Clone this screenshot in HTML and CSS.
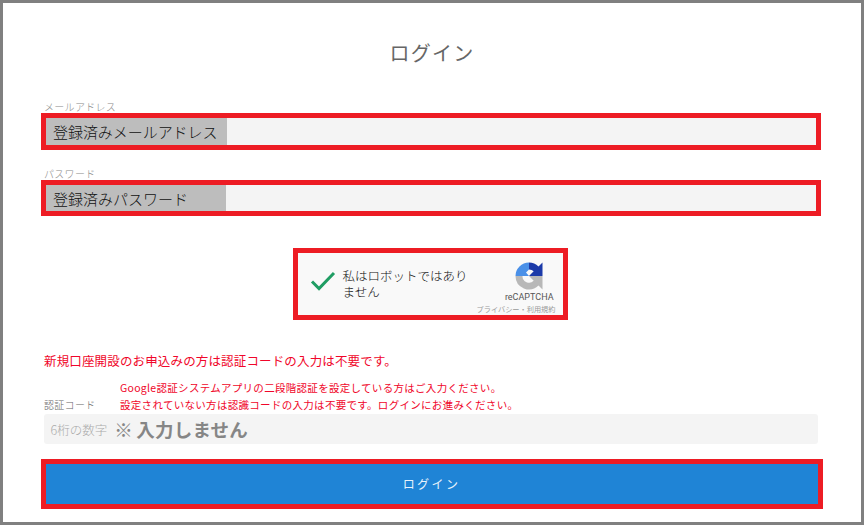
FILE: index.html
```html
<!DOCTYPE html>
<html lang="ja">
<head>
<meta charset="utf-8">
<title>ログイン</title>
<link rel="stylesheet" href="styles.css">
</head>
<body>
<main class="frame">
  <h1 class="title">ログイン</h1>
  <form class="form">
    <div class="field field-mail">
      <label class="label">メールアドレス</label>
      <div class="redbox box-mail"><span class="filled fill-mail">登録済みメールアドレス</span></div>
    </div>
    <div class="field field-pass">
      <label class="label">パスワード</label>
      <div class="redbox box-pass"><span class="filled fill-pass">登録済みパスワード</span></div>
    </div>
    <div class="captcha">
      <svg class="check" width="26" height="22" viewBox="0 0 26 22"><path d="M2 11.5 L9 18.5 L24 3" fill="none" stroke="#1f9d63" stroke-width="3"/></svg>
      <span class="captcha-text">私はロボットではありません</span>
      <div class="captcha-brand">
        <svg class="recaptcha" width="30" height="30" viewBox="0 0 30 30">
          <path d="M1.5 15 A13.5 13.5 0 0 1 15 1.5 L15 8.5 L12 11.5 L15 15 L8.5 15 Z" fill="#4a90e8"/>
          <path d="M15 1.5 A13.5 13.5 0 0 1 24.5 5.5 L28.5 1.5 L28.5 15 L15 15 L19.7 10.3 A6.5 6.5 0 0 0 15 8.5 Z" fill="#1c3aa9"/>
          <path d="M1.5 15 L8.5 15 A6.5 6.5 0 0 0 19.7 19.7 L15 15 L28.5 15 L28.5 28.5 L24.5 24.5 A13.5 13.5 0 0 1 1.5 15 Z" fill="#b8b8b8"/>
        </svg>
        <span class="brand-name">reCAPTCHA</span>
        <span class="brand-links">プライバシー・利用規約</span>
      </div>
    </div>
    <p class="notice">新規口座開設のお申込みの方は認証コードの入力は不要です。</p>
    <div class="code-head">
      <label class="label code-label">認証コード</label>
      <p class="code-note">Google認証システムアプリの二段階認証を設定している方はご入力ください。<br>設定されていない方は認識コードの入力は不要です。ログインにお進みください。</p>
    </div>
    <div class="code-input"><span class="placeholder">6桁の数字</span><span class="no-input">※ 入力しません</span></div>
    <button class="submit" type="button">ログイン</button>
  </form>
</main>
</body>
</html>
```
FILE: styles.css
```css
* { box-sizing: border-box; }
html, body { margin: 0; padding: 0; }
body {
  width: 864px;
  height: 525px;
  overflow: hidden;
  background: #fff;
  font-family: "Noto Sans CJK JP", "Noto Sans", sans-serif;
}
.frame {
  width: 864px;
  height: 525px;
  border: 3px solid #808080;
  background: #fff;
  padding-top: 36px;
}
.title {
  margin: 0;
  height: 28px;
  line-height: 28px;
  font-size: 20px;
  font-weight: 400;
  letter-spacing: 1.2px;
  color: #666;
  text-align: center;
}
.form {
  margin-top: 34px;
  padding-left: 38px;
  width: 818px;
  display: flex;
  flex-direction: column;
}
.label {
  display: block;
  height: 12px;
  line-height: 12px;
  font-size: 10px;
  color: #888;
  padding-left: 3px;
  letter-spacing: 0.3px;
  font-weight: 300;
}
.redbox {
  width: 780px;
  border: 5px solid #ed1c24;
  background: #f4f4f4;
  display: flex;
}
.box-mail { height: 37px; }
.box-pass { height: 36px; }
.field-pass { margin-top: 18px; }
.filled {
  background: #bdbdbd;
  color: #111;
  font-size: 15px;
  font-weight: 300;
  white-space: nowrap;
  display: flex;
  align-items: center;
}
.fill-mail { width: 181px; padding-left: 7px; letter-spacing: -0.05px; }
.fill-pass { width: 180px; padding-left: 7px; }
.captcha {
  align-self: center;
  margin: 32px 0 0 -2px;
  width: 275px;
  height: 72px;
  border: 5px solid #ed1c24;
  background: #f9f9f9;
  display: flex;
  align-items: flex-start;
  position: relative;
}
.check { margin: 17px 0 0 12px; flex: none; }
.captcha-text {
  width: 134px;
  margin: 15px 0 0 7px;
  font-size: 12.5px;
  font-weight: 300;
  line-height: 16px;
  color: #111;
}
.captcha-brand {
  position: absolute;
  right: 0;
  top: 0;
  width: 90px;
  height: 62px;
  display: flex;
  flex-direction: column;
  align-items: flex-end;
}
.recaptcha { margin: 8px 19px 0 0; }
.brand-name {
  margin: 1px 9px 0 0;
  font-family: "Roboto", sans-serif;
  font-size: 9px;
  line-height: 11px;
  color: #555;
}
.brand-links {
  margin: 2px 7px 0 0;
  font-size: 7.2px;
  line-height: 9px;
  color: #999;
  white-space: nowrap;
}
.notice {
  margin: 32px 0 0 3px;
  height: 18px;
  line-height: 18px;
  font-size: 12.5px;
  letter-spacing: 0.15px;
  font-weight: 400;
  color: #f0062a;
}
.code-head {
  display: flex;
  align-items: flex-end;
  margin-top: 9px;
}
.code-label {
  width: 79px;
  color: #666;
  flex: none;
  margin-bottom: 2px;
}
.code-note {
  margin: 0;
  font-size: 10.5px;
  line-height: 17px;
  letter-spacing: 0.3px;
  color: #f0062a;
  white-space: nowrap;
}
.code-input {
  margin: 1px 0 0 2.5px;
  width: 774.5px;
  height: 30px;
  background: #f4f4f4;
  border-radius: 3px;
  display: flex;
  align-items: center;
  padding-left: 7px;
}
.placeholder {
  font-size: 12.5px;
  font-weight: 300;
  color: #aaa;
}
.no-input {
  margin-left: 7px;
  font-size: 18.5px;
  font-weight: 700;
  letter-spacing: 0.2px;
  word-spacing: -1px;
  color: #868686;
}
.submit {
  margin-top: 15px;
  margin-left: -0.5px;
  width: 782px;
  height: 50px;
  border: 5px solid #ed1c24;
  background: #1f84d6;
  color: #e8f2fb;
  font: 400 12px "Noto Sans CJK JP", sans-serif;
  letter-spacing: 2.4px;
  padding: 0 0 2px;
}
```
